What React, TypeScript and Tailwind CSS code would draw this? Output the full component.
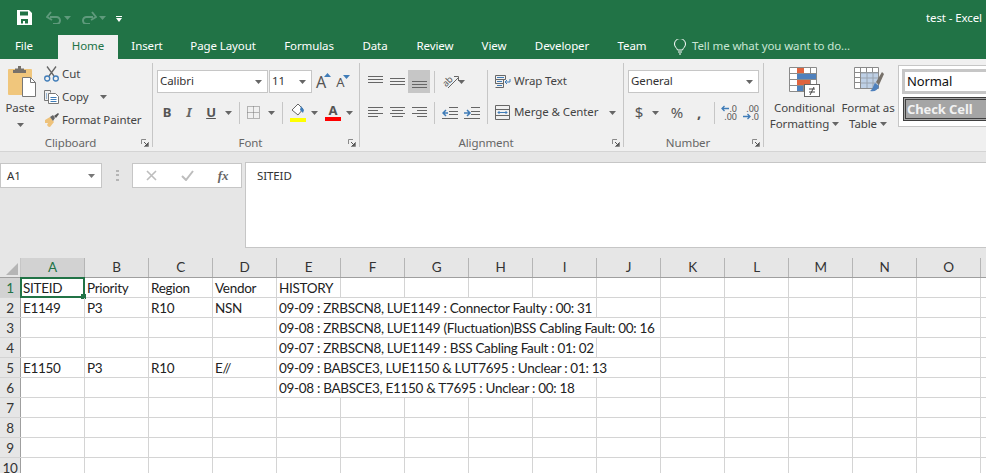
import type { ReactNode } from 'react'

const UI_FONT = "font-['Noto_Sans','Open_Sans',sans-serif]"
const GRID_FONT = "font-['Lato','Noto_Sans',sans-serif]"

const COLUMNS = ['A', 'B', 'C', 'D', 'E', 'F', 'G', 'H', 'I', 'J', 'K', 'L', 'M', 'N', 'O', 'P']

type Cell = { col: number; text: string; span?: number }

const ROWS: Cell[][] = [
    [{ col: 0, text: 'SITEID' }, { col: 1, text: 'Priority' }, { col: 2, text: 'Region' }, { col: 3, text: 'Vendor' }, { col: 4, text: 'HISTORY' }],
    [{ col: 0, text: 'E1149' }, { col: 1, text: 'P3' }, { col: 2, text: 'R10' }, { col: 3, text: 'NSN' }, { col: 4, text: '09-09 : ZRBSCN8, LUE1149 : Connector Faulty : 00: 31', span: 5 }],
    [{ col: 4, text: '09-08 : ZRBSCN8, LUE1149 (Fluctuation)BSS Cabling Fault: 00: 16', span: 6 }],
    [{ col: 4, text: '09-07 : ZRBSCN8, LUE1149 : BSS Cabling Fault : 01: 02', span: 5 }],
    [{ col: 0, text: 'E1150' }, { col: 1, text: 'P3' }, { col: 2, text: 'R10' }, { col: 3, text: 'E//' }, { col: 4, text: '09-09 : BABSCE3, LUE1150 & LUT7695 : Unclear : 01: 13', span: 6 }],
    [{ col: 4, text: '09-08 : BABSCE3, E1150 & T7695 : Unclear : 00: 18', span: 5 }],
    [], [], [], [],
]

const TABS = [
    { label: 'Insert', width: 'w-[58px]' },
    { label: 'Page Layout', width: 'w-[94px]' },
    { label: 'Formulas', width: 'w-[78px]' },
    { label: 'Data', width: 'w-[54px]' },
    { label: 'Review', width: 'w-[66px]' },
    { label: 'View', width: 'w-[52px]' },
    { label: 'Developer', width: 'w-[84px]' },
    { label: 'Team', width: 'w-[56px]' },
]

function Caret({ color = '#666666' }: { color?: string }) {
    return (
        <svg width="7" height="4" viewBox="0 0 7 4" className="shrink-0">
            <path d="M0 0h7L3.5 4z" fill={color} />
        </svg>
    )
}

function Launcher() {
    return (
        <svg width="8" height="8" viewBox="0 0 8 8" className="shrink-0 relative top-[2px]">
            <path d="M.5 5V.5H5M7.5 3v4.5H3" fill="none" stroke="#8a8a8a" />
            <path d="M3 3l3.5 3.5M6.5 4v2.5H4" fill="none" stroke="#555555" />
        </svg>
    )
}

function Sep({ className = '' }: { className?: string }) {
    return <div className={`w-px h-[22px] bg-[#c6c6c6] shrink-0 ${className}`} />
}

function Group({ width, label, children }: { width: string; label: string; children: ReactNode }) {
    return (
        <div className={`${width} shrink-0 h-[84px] mt-[4px] flex flex-col border-r border-[#c6c6c6]`}>
            <div className="h-[72px]">{children}</div>
            <div className="h-[12px] flex items-center pr-[3px]">
                <span className="flex-1 text-center text-[11.5px] leading-[16px] text-[#666666] relative top-[2px]">{label}</span>
                <Launcher />
            </div>
        </div>
    )
}

function Btn({ children, className = '' }: { children: ReactNode; className?: string }) {
    return <div className={`w-[22px] h-full flex items-center justify-center shrink-0 ${className}`}>{children}</div>
}

function Combo({ text, width }: { text: string; width: string }) {
    return (
        <div className={`${width} h-[23px] bg-white border border-[#c6c6c6] flex items-center justify-between pl-[2px] pr-[5px] shrink-0`}>
            <span className="text-[11.5px] text-[#333333] relative -top-px">{text}</span>
            <Caret />
        </div>
    )
}

function AlignLines({ lines }: { lines: [number, number, number][] }) {
    return (
        <svg width="15" height="15" viewBox="0 0 15 15">
            {lines.map(([x, y, w], i) => (
                <rect key={i} x={x} y={y} width={w} height="1" fill="#666666" />
            ))}
        </svg>
    )
}

function ClipboardGroup() {
    return (
        <div className="flex h-full">
            <div className="w-[40px] flex flex-col items-center pt-[3px]">
                <svg width="29" height="32" viewBox="0 0 29 32" className="ml-[4px]">
                    <rect x="0" y="3" width="24" height="26" rx="1" fill="#f0c67c" />
                    <path d="M7 4V2.5h3V0h3v2.5h3V4h2v3H5V4z" fill="#77716a" />
                    <path d="M14.5 11.5h8l5 5V30.5h-13z" fill="#ffffff" stroke="#777777" />
                    <path d="M22.5 11.5v5h5" fill="none" stroke="#777777" />
                </svg>
                <span className="text-[11.5px] leading-[16px] text-[#444444] mt-[2px]">Paste</span>
                <div className="mt-[7px]"><Caret /></div>
            </div>
            <div className="ml-[4px] -mt-px flex flex-col text-[11.5px] text-[#444444]">
                <div className="h-[23px] flex items-center gap-[3px]">
                    <svg width="15" height="16" viewBox="0 0 15 16">
                        <path d="M3 .5L10 10M12 .5L5 10" stroke="#666666" strokeWidth="1.3" fill="none" />
                        <circle cx="3.2" cy="12.5" r="2.5" fill="none" stroke="#3f7cb8" strokeWidth="1.3" />
                        <circle cx="11.8" cy="12.5" r="2.5" fill="none" stroke="#3f7cb8" strokeWidth="1.3" />
                    </svg>
                    <span>Cut</span>
                </div>
                <div className="h-[23px] flex items-center gap-[3px]">
                    <svg width="15" height="14" viewBox="0 0 15 14">
                        <path d="M.5.5h6v2M4 10.5H.5V.5" fill="none" stroke="#777777" />
                        <path d="M4.5 3.5h7l3 3v7h-10z" fill="#ffffff" stroke="#777777" />
                        <path d="M2 4h1M2 6h1M2 8h1M6.500 7.500h6M6.500 9.500h6M6.500 11.500h6" stroke="#3f7cb8" />
                    </svg>
                    <span>Copy</span>
                    <div className="ml-[8px]"><Caret /></div>
                </div>
                <div className="h-[23px] flex items-center gap-[3px]">
                    <svg width="15" height="14" viewBox="0 0 15 14">
                        <path d="M1 7l5-3 4 5-4 5c-2 0-2-1-3-2l1-2-3 0z" fill="#eec27a" />
                        <path d="M6 4l3-2 2 3-2 3z" fill="#666666" />
                        <path d="M10 3l4-3 1 1-3 4z" fill="#555555" />
                    </svg>
                    <span>Format Painter</span>
                </div>
            </div>
        </div>
    )
}

function FontGroup() {
    return (
        <div className="pt-[7px]">
            <div className="h-[23px] flex items-center pl-[4px]">
                <Combo text="Calibri" width="w-[111px]" />
                <Combo text="11" width="w-[43px] ml-px" />
                <span className="ml-[4px] text-[16px] leading-none text-[#555555] relative">
                    A
                    <svg width="7" height="4" viewBox="0 0 7 4" className="absolute -right-[5px] -top-[1px]"><path d="M0 4h7L3.5 0z" fill="#3f7cb8" /></svg>
                </span>
                <span className="ml-[10px] text-[13px] leading-none text-[#555555] relative top-[1px]">
                    A
                    <svg width="7" height="4" viewBox="0 0 7 4" className="absolute -right-[6px] -top-[1px]"><path d="M0 0h7L3.5 4z" fill="#3f7cb8" /></svg>
                </span>
            </div>
            <div className="h-[25px] mt-[7px] flex items-center pl-[3px]">
                <Btn><span className="text-[13px] font-bold text-[#555555]">B</span></Btn>
                <Btn><span className="text-[13px] italic font-bold text-[#666666]">I</span></Btn>
                <Btn><span className="text-[13px] font-bold underline text-[#555555]">U</span></Btn>
                <div className="w-[12px] flex justify-center"><Caret /></div>
                <Sep className="ml-[5px]" />
                <Btn className="ml-[2px]">
                    <svg width="13" height="13" viewBox="0 0 13 13">
                        <path d="M.5.5h12v12H.5zM6.500.5v12M.5 6.500h12" fill="none" stroke="#777777" strokeDasharray="1 1" />
                    </svg>
                </Btn>
                <div className="w-[12px] flex justify-center ml-px"><Caret /></div>
                <Sep className="ml-[5px]" />
                <Btn className="ml-[4px]">
                    <svg width="16" height="19" viewBox="0 0 16 19">
                        <path d="M2 7l6-6 5 5-5 6z" fill="#ffffff" stroke="#666666" />
                        <path d="M11 3l3 4-1 3-3-3z" fill="#3f7cb8" />
                        <rect x="0" y="15" width="16" height="4" fill="#ffff00" />
                    </svg>
                </Btn>
                <div className="w-[12px] flex justify-center -ml-[1px]"><Caret /></div>
                <Btn className="ml-[2px]">
                    <div className="flex flex-col items-center">
                        <span className="text-[13px] leading-[13px] font-bold text-[#555555]">A</span>
                        <div className="w-[16px] h-[4px] bg-[#ff0000]" />
                    </div>
                </Btn>
                <div className="w-[12px] flex justify-center -ml-[1px]"><Caret /></div>
            </div>
        </div>
    )
}

function WrapIcon() {
    return (
        <svg width="16" height="15" viewBox="0 0 16 15">
            <path d="M.5 1.500h10v4H.5zM.5 5.500h8v4H.5zM.5 9.500h8v4H.5" fill="none" stroke="#666666" />
            <path d="M2 3.500h7M2 7.500h5M2 11.500h5" stroke="#3f7cb8" />
            <path d="M15 5v3h-5M12 6l-2 2 2 2" fill="none" stroke="#3f7cb8" />
        </svg>
    )
}

function MergeIcon() {
    return (
        <svg width="15" height="15" viewBox="0 0 15 15">
            <path d="M.5.5h14v14H.5zM.5 4.500h14M.5 10.500h14" fill="none" stroke="#666666" />
            <path d="M3 7.500h9M4.500 6L3 7.500 4.500 9M10.500 6L12 7.500 10.500 9" fill="none" stroke="#3f7cb8" />
        </svg>
    )
}

function IndentIcon({ flip = false }: { flip?: boolean }) {
    return (
        <svg width="16" height="12" viewBox="0 0 16 12">
            <path d="M7 .5h9M7 4.500h9M7 7.500h9M0 11.500h16" stroke="#666666" />
            <path d={flip ? 'M0 6h5M3 3l3 3-3 3' : 'M6 6H1M4 3L1 6l3 3'} fill="none" stroke="#3f7cb8" strokeWidth="1.5" />
        </svg>
    )
}

function AlignmentGroup() {
    return (
        <div className="flex pt-[7px] pl-[4px]">
            <div>
                <div className="h-[23px] flex items-center">
                    <Btn><AlignLines lines={[[0, 2, 15], [0, 5, 15], [0, 8, 15]]} /></Btn>
                    <Btn><AlignLines lines={[[0, 4, 15], [0, 7, 15], [0, 10, 15]]} /></Btn>
                    <Btn className="bg-[#c6c6c6]"><AlignLines lines={[[0, 7, 15], [0, 10, 15], [0, 13, 15]]} /></Btn>
                    <Sep className="ml-[4px]" />
                    <Btn className="ml-[4px]">
                        <svg width="17" height="17" viewBox="0 0 17 17" className="overflow-visible">
                            <text x="0" y="11" fontSize="9" fill="#555555" transform="rotate(-45 6 8)" style={{ fontFamily: 'Noto Sans' }}>ab</text>
                            <path d="M6 15L16 5M12 3.500h4.500V8" fill="none" stroke="#666666" />
                        </svg>
                    </Btn>
                    <div className="-ml-[3px]"><Caret /></div>
                </div>
                <div className="h-[25px] mt-[7px] flex items-center">
                    <Btn><AlignLines lines={[[0, 2, 15], [0, 5, 10], [0, 8, 15], [0, 11, 10]]} /></Btn>
                    <Btn><AlignLines lines={[[0, 2, 15], [2, 5, 11], [0, 8, 15], [2, 11, 11]]} /></Btn>
                    <Btn><AlignLines lines={[[0, 2, 15], [5, 5, 10], [0, 8, 15], [5, 11, 10]]} /></Btn>
                    <Sep className="ml-[4px]" />
                    <Btn className="ml-[4px]"><IndentIcon /></Btn>
                    <Btn><IndentIcon flip /></Btn>
                </div>
            </div>
            <div className="ml-[4px]">
                <Sep className="h-[54px]" />
            </div>
            <div className="ml-[7px] text-[11.5px] text-[#444444]">
                <div className="h-[23px] flex items-center gap-[3px]"><WrapIcon /><span className="relative -top-px">Wrap Text</span></div>
                <div className="h-[25px] mt-[7px] flex items-center gap-[4px]">
                    <MergeIcon /><span className="relative -top-px">Merge &amp; Center</span>
                    <div className="ml-[7px]"><Caret /></div>
                </div>
            </div>
        </div>
    )
}

function DecimalIcon({ more = false }: { more?: boolean }) {
    const arrow = more
        ? <svg width="8" height="7" viewBox="0 0 8 7"><path d="M0 3.500h7M4.500 1L7 3.500 4.500 6" fill="none" stroke="#3f7cb8" strokeWidth="1.300" /></svg>
        : <svg width="8" height="7" viewBox="0 0 8 7"><path d="M8 3.500H1M3.500 1L1 3.500 3.500 6" fill="none" stroke="#3f7cb8" strokeWidth="1.300" /></svg>
    const top = more ? <span>.00</span> : <>{arrow}<span>.0</span></>
    const bottom = more ? <>{arrow}<span>.0</span></> : <span>.00</span>
    return (
        <div className="w-[18px] flex flex-col items-end text-[9px] leading-[8px] tracking-normal text-[#555555]">
            <div className="flex items-center h-[8px]">{top}</div>
            <div className="flex items-center h-[8px]">{bottom}</div>
        </div>
    )
}

function NumberGroup() {
    return (
        <div className="pt-[7px] pl-[4px]">
            <Combo text="General" width="w-[131px]" />
            <div className="h-[25px] mt-[7px] flex items-center -ml-[4px] pl-[5px] text-[#555555]">
                <span className="w-[20px] text-center text-[15px]">$</span>
                <div className="w-[12px] flex justify-center"><Caret /></div>
                <span className="ml-[6px] w-[20px] text-center text-[15px]">%</span>
                <span className="ml-[2px] w-[20px] text-center text-[15px] font-bold">,</span>
                <Sep className="ml-[5px]" />
                <Btn className="ml-[2px]"><DecimalIcon /></Btn>
                <Btn><DecimalIcon more /></Btn>
            </div>
        </div>
    )
}

function StylesGroup() {
    return (
        <div className="flex text-[11.5px] text-[#444444] leading-[16px]">
            <div className="w-[69px] ml-[6px] flex flex-col items-center pt-[3px]">
                <svg width="31" height="31" viewBox="0 0 31 31">
                    <path d="M.5 1.500h27v24H.5zM.5 7.500h27M.5 13.500h27M.5 19.500h27M8.500 1.500v24M14.500 1.500v24M21.500 1.500v24" fill="#ffffff" stroke="#8a8a8a" />
                    <rect x="8" y="2" width="7" height="5" fill="#e0643f" />
                    <rect x="8" y="8" width="19" height="5" fill="#4f81bd" />
                    <rect x="8" y="14" width="13" height="5" fill="#e0643f" />
                    <rect x="8" y="20" width="6" height="5" fill="#4f81bd" />
                    <rect x="15.500" y="18.500" width="15" height="12" fill="#ffffff" stroke="#666666" />
                    <path d="M20 23h6M20 26h6M25 21l-4 8" stroke="#444444" fill="none" />
                </svg>
                <span className="mt-[3px]">Conditional</span>
                <div className="flex items-center gap-[3px]"><span>Formatting</span><Caret /></div>
            </div>
            <div className="w-[56px] ml-[1px] flex flex-col items-center pt-[3px]">
                <svg width="31" height="31" viewBox="0 0 31 31" className="ml-[3px]">
                    <path d="M.5 1.500h24v21H.5zM.5 6.500h24M.5 11.500h24M.5 16.500h24M6.500 1.500v21M12.500 1.500v21M18.500 1.500v21" fill="#ffffff" stroke="#8a8a8a" />
                    <rect x="7" y="7" width="17" height="15" fill="#bed0e6" />
                    <path d="M7 7h17M7 12h17M7 17h17M13 7v15M19 7v15" stroke="#9aa4b0" />
                    <path d="M22 16l6-10 2 2-5 11z" fill="#77716a" />
                    <path d="M21 17l4 3c-1 4-4 6-9 5 3-2 3-5 5-8z" fill="#4f81bd" />
                </svg>
                <span className="mt-[3px] whitespace-nowrap">Format as</span>
                <div className="flex items-center gap-[3px]"><span>Table</span><Caret /></div>
            </div>
            <div className="ml-[2px] mt-[2px] w-[100px] h-[62px] border border-[#c6c6c6] bg-white flex flex-col">
                <div className="mt-[3px] ml-[3px] h-[25px] border-[3px] border-r-0 border-[#c6c6c6] flex items-center pl-[2px] pb-[2px] text-[13px] text-[#111111]">Normal</div>
                <div className="mt-[3px] ml-[4px] h-[24px] bg-[#a5a5a5] border-[3px] border-double border-[#3f3f3f] flex items-center pl-[1px] text-[13px] font-bold text-[#f2f2f2]">Check Cell</div>
            </div>
        </div>
    )
}

function FormulaBar() {
    return (
        <div className="h-[106px] bg-[#e6e6e6] flex pt-[10px] shrink-0">
            <div className="w-[102px] h-[25px] mt-[1px] bg-white border border-[#c6c6c6] flex items-center justify-between pl-[6px] pr-[6px] text-[11.5px] text-[#333333]">
                <span>A1</span>
                <Caret color="#777777" />
            </div>
            <div className="w-[30px] h-[25px] mt-[1px] flex items-center justify-center">
                <svg width="3" height="11" viewBox="0 0 3 11"><path d="M0 0h3v2H0zM0 4h3v2H0zM0 9h3v2H0z" fill="#b5b5b5" /></svg>
            </div>
            <div className="w-[110px] h-[25px] mt-[1px] bg-white border border-[#c6c6c6] flex items-center">
                <div className="w-[36px] flex justify-center">
                    <svg width="11" height="11" viewBox="0 0 11 11"><path d="M1 1l9 9M10 1l-9 9" stroke="#bdbdbd" strokeWidth="1.600" /></svg>
                </div>
                <div className="w-[36px] flex justify-center">
                    <svg width="13" height="11" viewBox="0 0 13 11"><path d="M1 6l4 4 7-9" fill="none" stroke="#bdbdbd" strokeWidth="2" /></svg>
                </div>
                <span className="w-[36px] text-center text-[13px] italic font-bold text-[#666666] font-['Liberation_Serif',serif]">fx</span>
            </div>
            <div className="ml-[3px] flex-1 h-[86px] bg-white border border-[#c6c6c6] border-r-0 pl-[11px] pt-[4px] text-[11.5px] leading-[18px] text-[#333333]">SITEID</div>
        </div>
    )
}

function Sheet() {
    return (
        <div className={`flex-1 overflow-hidden bg-white text-[13.5px] tracking-[-0.3px] text-[#222222] ${GRID_FONT}`}>
            <div className="flex h-[20px] bg-[#e6e6e6] border-b border-[#9f9f9f]">
                <div className="w-[21px] shrink-0 flex items-end justify-end pr-[2px] pb-[2px] border-r border-[#c6c6c6]">
                    <svg width="12" height="12" viewBox="0 0 12 12"><path d="M12 0v12H0z" fill="#b5b5b5" /></svg>
                </div>
                {COLUMNS.map(c => (
                    <div key={c} className={`w-[64px] shrink-0 border-r border-[#b5b5b5] flex items-center justify-center ${c === 'A' ? 'bg-[#d2d2d2] text-[#217346]' : 'text-[#333333]'}`}>
                        {c}
                    </div>
                ))}
            </div>
            {ROWS.map((row, r) => {
                const cells: ReactNode[] = []
                let col = 0
                while (col < COLUMNS.length) {
                    const cell = row.find(x => x.col === col)
                    const span = cell?.span ?? 1
                    cells.push(
                        <div
                            key={col}
                            className="relative shrink-0 border-r border-[#d4d4d4] pl-[2px] pt-[2px] flex items-center whitespace-nowrap"
                            style={{ width: 64 * span }}
                        >
                            <span>{cell?.text}</span>
                            {r === 0 && col === 0 && (
                                <div className="absolute -left-px -top-px -right-px -bottom-px border-2 border-[#217346]">
                                    <div className="absolute -right-[3px] -bottom-[3px] w-[5px] h-[5px] bg-[#217346]" />
                                </div>
                            )}
                        </div>
                    )
                    col += span
                }
                return (
                    <div key={r} className="flex h-[20px] border-b border-[#d4d4d4]">
                        <div className={`w-[21px] shrink-0 border-r border-[#9f9f9f] pt-[2px] flex items-center justify-center ${r === 0 ? 'bg-[#d2d2d2] text-[#217346]' : 'bg-[#e6e6e6] text-[#333333]'}`}>
                            {r + 1}
                        </div>
                        {cells}
                    </div>
                )
            })}
        </div>
    )
}

export default function App() {
    return (
        <div className={`w-[986px] h-[473px] overflow-hidden flex flex-col bg-white tracking-[-0.1px] ${UI_FONT}`}>
            {/* barre de titre */}
            <div className="h-[35px] bg-[#217346] flex items-center shrink-0 text-white">
                <svg width="15" height="15" viewBox="0 0 15 15" className="ml-[17px]">
                    <path d="M0 0h12l3 3v12H0zM3 1.500v4h8v-4zM4 9v4.500h2V11h2v2.500h3V9z" fill="#ffffff" fillRule="evenodd" />
                </svg>
                <svg width="16" height="13" viewBox="0 0 16 13" className="ml-[14px]">
                    <path d="M4 6h6.500a3.500 3.500 0 010 7H7M5 1L1 6l5 3" fill="none" stroke="#5f9a7c" strokeWidth="2" />
                </svg>
                <div className="ml-[2px]"><Caret color="#5f9a7c" /></div>
                <svg width="16" height="13" viewBox="0 0 16 13" className="ml-[10px]">
                    <path d="M12 6H5.500a3.500 3.500 0 000 7H9M11 1l4 5-5 3" fill="none" stroke="#5f9a7c" strokeWidth="2" />
                </svg>
                <div className="ml-[2px]"><Caret color="#5f9a7c" /></div>
                <svg width="6" height="6" viewBox="0 0 6 6" className="ml-[10px] mt-[2px]"><path d="M0 0h6v1H0zM0 2h6L3 6z" fill="#ffffff" /></svg>
                <span className="ml-auto mr-[4px] text-[11.5px]">test - Excel</span>
            </div>

            {/* onglets */}
            <div className="h-[24px] bg-[#217346] flex items-end text-[11.5px] text-white shrink-0">
                <div className="w-[58px] h-[24px] flex items-center justify-center pr-[10px] pb-[2px]">File</div>
                <div className="w-[60px] h-[24px] bg-[#f0f0f0] text-[#217346] flex items-center justify-center pb-[2px]">Home</div>
                {TABS.map(t => (
                    <div key={t.label} className={`${t.width} h-[24px] flex items-center justify-center whitespace-nowrap pb-[2px]`}>{t.label}</div>
                ))}
                <svg width="12" height="16" viewBox="0 0 12 16" className="ml-[14px] mb-[4px]">
                    <path d="M3.500 11C3 9 .5 8 .5 5a5.500 5.500 0 0111 0c0 3-2.500 4-3 6zM4 13h4M5 15h2" fill="none" stroke="#ffffff" />
                </svg>
                <div className="h-[24px] flex items-center ml-[6px] pb-[2px] text-[#c8e6d4] whitespace-nowrap">Tell me what you want to do...</div>
            </div>

            {/* ruban */}
            <div className="h-[93px] bg-[#f0f0f0] border-b border-[#d4d4d4] flex shrink-0 overflow-hidden">
                <Group width="w-[153px]" label="Clipboard"><ClipboardGroup /></Group>
                <Group width="w-[207px]" label="Font"><FontGroup /></Group>
                <Group width="w-[264px]" label="Alignment"><AlignmentGroup /></Group>
                <Group width="w-[140px]" label="Number"><NumberGroup /></Group>
                <div className="h-[84px] mt-[4px]"><StylesGroup /></div>
            </div>

            <FormulaBar />
            <Sheet />
        </div>
    )
}
